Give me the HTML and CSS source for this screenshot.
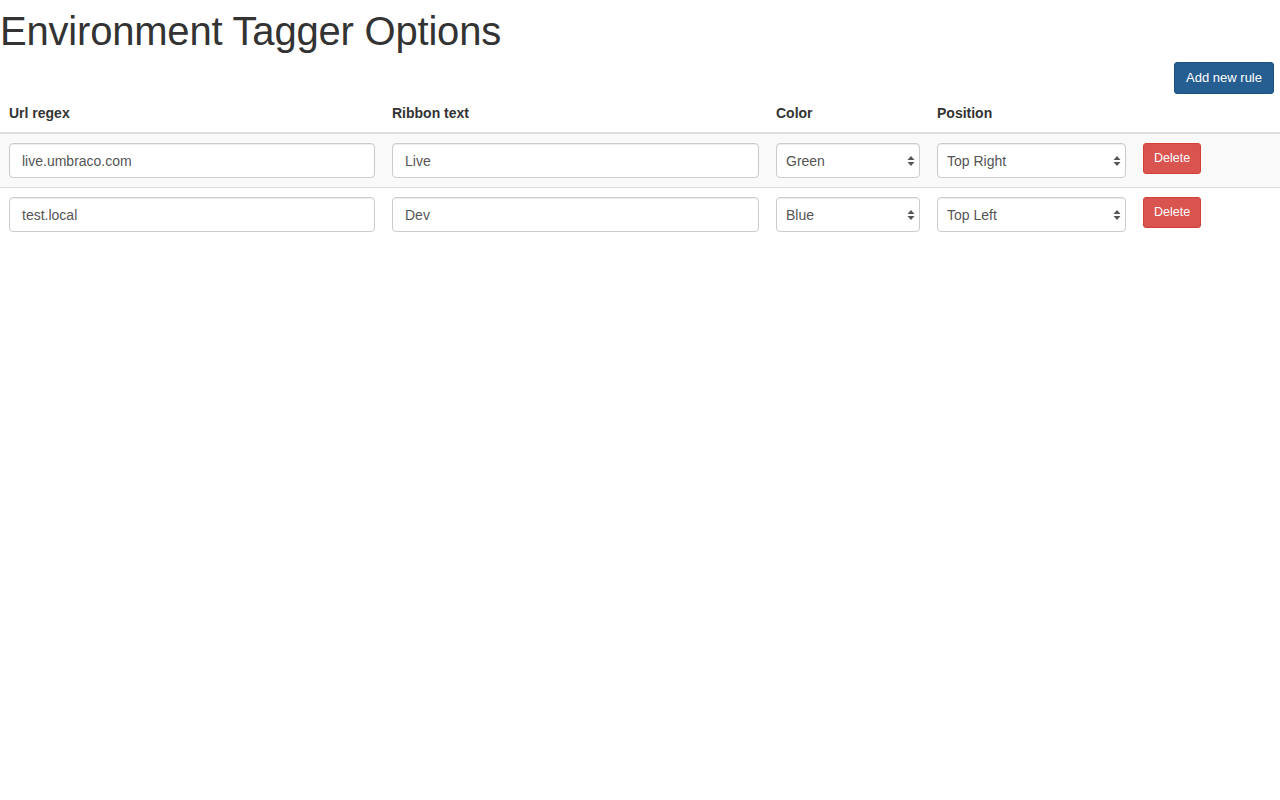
FILE: index.html
```html
<!DOCTYPE html>
<html>
<head>
<meta charset="utf-8">
<title>Environment Tagger Options</title>
<link rel="stylesheet" href="styles.css">
</head>
<body>
<h1 class="title">Environment Tagger Options</h1>
<div class="toolbar">
  <button class="btn btn-primary">Add new rule</button>
</div>
<table class="rules">
  <colgroup>
    <col class="c1"><col class="c2"><col class="c3"><col class="c4"><col class="c5">
  </colgroup>
  <thead>
    <tr><th>Url regex</th><th>Ribbon text</th><th>Color</th><th>Position</th><th></th></tr>
  </thead>
  <tbody>
    <tr class="odd">
      <td><input class="field" type="text" value="live.umbraco.com"></td>
      <td><input class="field" type="text" value="Live"></td>
      <td><div class="sel"><select class="field select"><option>Green</option><option>Blue</option><option>Red</option></select><svg class="arrows" width="8" height="12" viewBox="0 0 8 12"><path d="M4 1L7.5 5H0.5z M4 11L7.5 7H0.5z" fill="#555"/></svg></div></td>
      <td><div class="sel"><select class="field select"><option>Top Right</option><option>Top Left</option></select><svg class="arrows" width="8" height="12" viewBox="0 0 8 12"><path d="M4 1L7.5 5H0.5z M4 11L7.5 7H0.5z" fill="#555"/></svg></div></td>
      <td><button class="btn btn-danger">Delete</button></td>
    </tr>
    <tr>
      <td><input class="field" type="text" value="test.local"></td>
      <td><input class="field" type="text" value="Dev"></td>
      <td><div class="sel"><select class="field select"><option>Blue</option><option>Green</option><option>Red</option></select><svg class="arrows" width="8" height="12" viewBox="0 0 8 12"><path d="M4 1L7.5 5H0.5z M4 11L7.5 7H0.5z" fill="#555"/></svg></div></td>
      <td><div class="sel"><select class="field select"><option>Top Left</option><option>Top Right</option></select><svg class="arrows" width="8" height="12" viewBox="0 0 8 12"><path d="M4 1L7.5 5H0.5z M4 11L7.5 7H0.5z" fill="#555"/></svg></div></td>
      <td><button class="btn btn-danger">Delete</button></td>
    </tr>
  </tbody>
</table>
</body>
</html>
```
FILE: styles.css
```css
html, body {
  margin: 0;
  padding: 0;
  background: #fff;
}
body {
  font-family: "Liberation Sans", Arial, Helvetica, sans-serif;
  font-size: 14px;
  line-height: 1.42857;
  color: #333;
}
.title {
  margin: 0;
  padding-top: 9px;
  font-size: 40px;
  font-weight: 400;
  line-height: 44px;
  color: #333;
  letter-spacing: -0.2px;
}
.toolbar {
  display: flex;
  justify-content: flex-end;
  padding: 9px 6px 1px 0;
}
.btn {
  font-family: "Liberation Sans", Arial, Helvetica, sans-serif;
  border-radius: 3px;
  border: 1px solid transparent;
  color: #fff;
  cursor: pointer;
}
.btn-primary {
  font-size: 13px;
  line-height: 18px;
  background: #265e92;
  border-color: #1f4f7c;
  padding: 6px 11px;
}
.btn-danger {
  font-size: 12.5px;
  line-height: 19px;
  background: #d9534f;
  border-color: #d43f3a;
  padding: 5px 10px;
  display: block;
}
.rules {
  width: 100%;
  border-collapse: collapse;
  border-spacing: 0;
  table-layout: fixed;
}
.c1 { width: 383px; }
.c2 { width: 384px; }
.c3 { width: 161px; }
.c4 { width: 206px; }
.c5 { width: auto; }
.rules th {
  text-align: left;
  font-weight: 700;
  padding: 8px 8px 9px 9px;
  line-height: 20px;
  border-bottom: 2px solid #ddd;
}
.rules td {
  padding: 9px 8px 9px 9px;
  vertical-align: top;
  border-bottom: 1px solid #ddd;
}
.rules tbody tr:last-child td {
  border-bottom: none;
}
.rules tr.odd td {
  background: #f9f9f9;
}
.field {
  display: block;
  box-sizing: border-box;
  width: 100%;
  height: 35px;
  padding: 6px 12px;
  font-family: "Liberation Sans", Arial, Helvetica, sans-serif;
  font-size: 14px;
  color: #555;
  background: #fff;
  border: 1px solid #ccc;
  border-radius: 4px;
  box-shadow: inset 0 1px 1px rgba(0,0,0,0.075);
  outline: none;
}
.sel {
  position: relative;
}
.select {
  -webkit-appearance: none;
  appearance: none;
  padding: 6px 20px 6px 9px;
}
.arrows {
  position: absolute;
  right: 5px;
  top: 12px;
  pointer-events: none;
}
```
